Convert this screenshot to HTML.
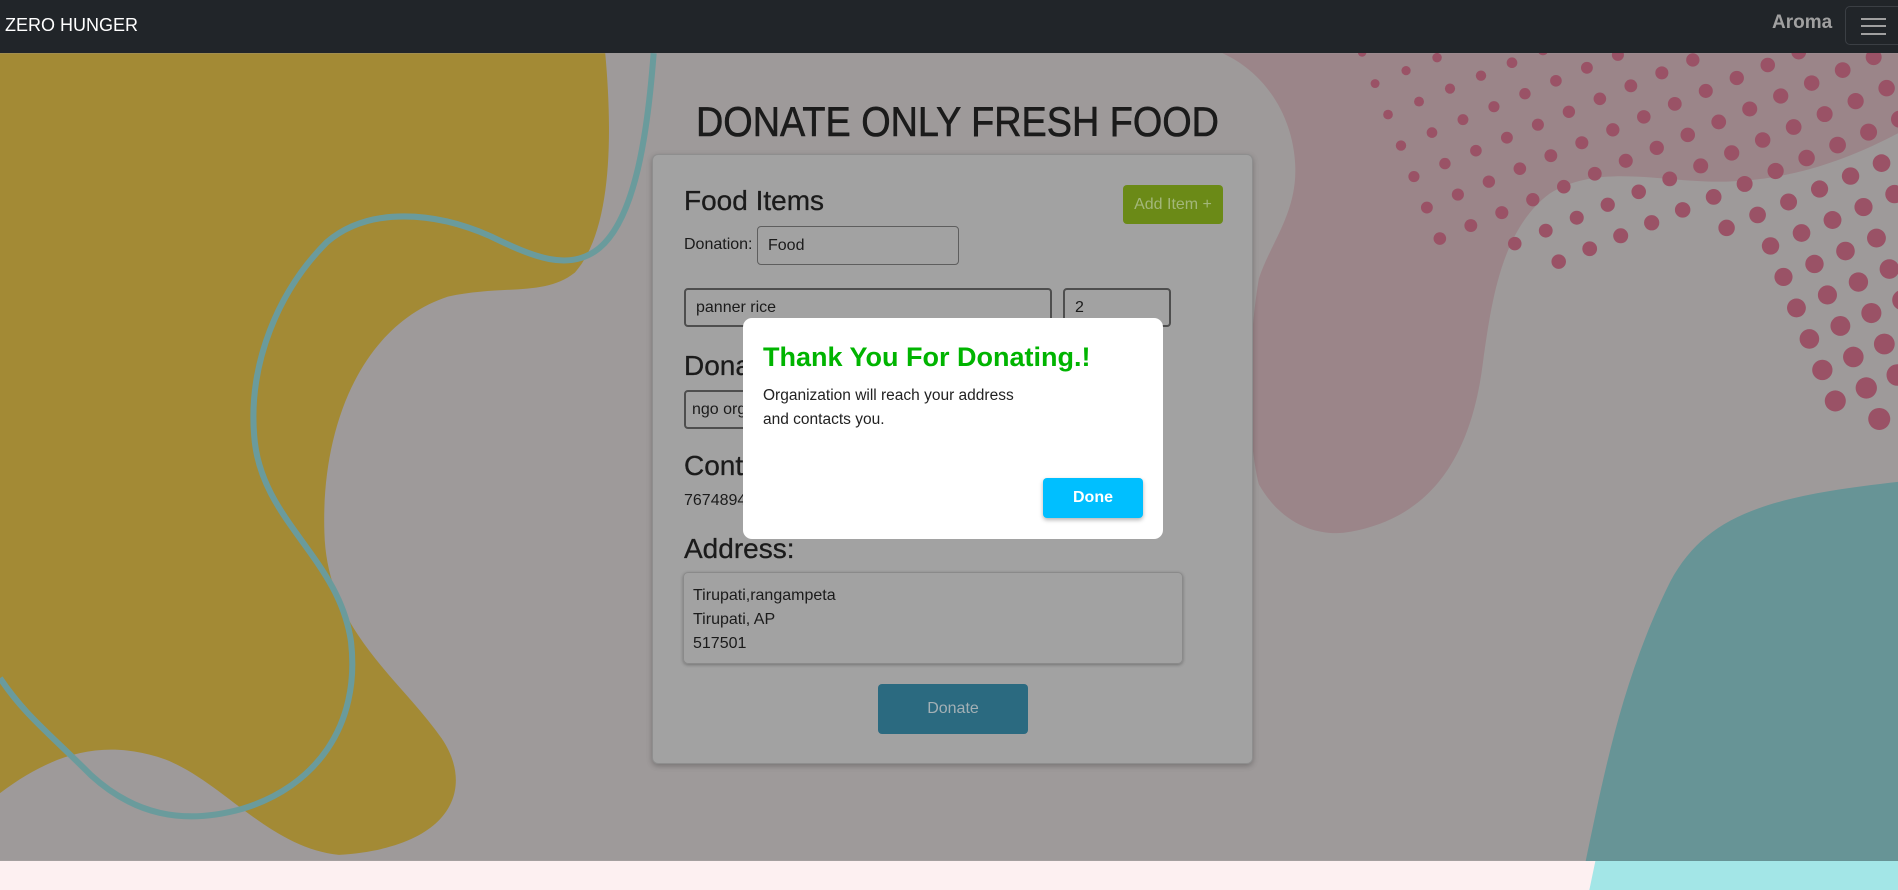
<!DOCTYPE html>
<html><head><meta charset="utf-8"><style>
*{box-sizing:border-box;margin:0;padding:0}
body{width:1898px;height:890px;overflow:hidden;font-family:"Liberation Sans",sans-serif;background:#fdf0f1;position:relative}
.nav{position:absolute;left:0;top:0;width:1898px;height:53px;background:#212529;z-index:5}
.brand{position:absolute;left:5px;top:15px;color:#fff;font-size:18px}
.aroma{position:absolute;left:1772px;top:12px;color:#a0a0a0;font-size:19px;font-weight:bold}
.tog{position:absolute;left:1845px;top:6px;width:60px;height:39px;border:1px solid #3b3f44;border-radius:5px}
.tog i{position:absolute;left:15px;width:25px;height:2px;background:#a0a0a0}
svg.bg{position:absolute;left:0;top:0}
.abs{position:absolute}
.title{left:696px;top:98px;font-size:42px;color:#1b1b1b;white-space:nowrap;transform:scaleX(0.9);transform-origin:0 0;-webkit-text-stroke:0.6px #1b1b1b}
.card{left:652px;top:154px;width:601px;height:610px;background:#a2a2a2;border:1px solid #8e8e8e;border-radius:6px;box-shadow:0 2px 6px rgba(0,0,0,.25)}
.h{font-size:28px;color:#1b1b1b;white-space:nowrap;-webkit-text-stroke:0.3px #1b1b1b}
.inp{border:1px solid #5e5e5e;border-radius:4px;font-size:16px;color:#1b1b1b;padding-left:10px;display:flex;align-items:center}
.inp2{border:2px solid #4e4e4e}
.modal{left:743px;top:318px;width:420px;height:221px;background:#fff;border-radius:9px}
</style></head><body>
<svg class="bg" width="1898" height="890" viewBox="0 0 1568 735" preserveAspectRatio="none">
<rect x="0" y="0" width="1568" height="711" fill="#9e9a9a"/>
<path d="M1010,44 C1045,60 1068,95 1070,136 C1072,175 1050,200 1040,230 C1030,290 1030,360 1040,400 C1060,435 1090,442 1110,440 C1180,430 1215,380 1225,300 C1232,250 1240,190 1280,160 C1320,135 1370,150 1420,150 C1480,150 1530,130 1568,110 L1568,44 Z" fill="#9b8589"/>
<path d="M1310,711 C1325,640 1340,560 1380,480 C1410,425 1460,410 1568,398 L1568,711 Z" fill="#679496"/>
<path d="M1318,711 L1568,711 L1568,735 L1313,735 Z" fill="#a3e6e7"/>
<path d="M0,44 L500,44 C506,110 506,190 475,225 C450,245 415,235 370,245 C300,268 265,350 268,440 C270,520 330,560 365,610 C392,650 375,700 280,706 C220,700 180,640 130,625 C80,610 40,625 0,655 Z" fill="#a38a35"/>
<path d="M540,44 C535,110 525,180 495,205 C470,225 440,212 405,195 C360,175 305,170 270,200 C230,240 205,300 210,360 C215,430 280,460 290,530 C298,600 260,650 200,668 C150,682 110,672 75,640 C40,605 20,590 0,560" fill="none" stroke="#6a9b9c" stroke-width="5"/>
<g id="dots" fill="#9a5266"></g>
</svg>
<script>
var g=document.getElementById('dots'),s='';
for(var i=0;i<=14;i++)for(var j=-8;j<=16;j++){
var x=1136+25.6*i+10.7*j,y=69-10.7*i+25.6*j;
var lim=i<=1?5:i==2?6:i<=7?7:i==8?8:i==9?14:15;
if(j>lim||x>1575||y<40||y>380)continue;
var r=3.7+0.29*j+0.1*i;if(r<3.5)r=3.5;
s+='<circle cx="'+x.toFixed(1)+'" cy="'+y.toFixed(1)+'" r="'+r.toFixed(1)+'"/>';}
g.innerHTML=s;
</script>
<div class="nav"><div class="brand">ZERO HUNGER</div><div class="aroma">Aroma</div>
<div class="tog"><i style="top:11px"></i><i style="top:18px"></i><i style="top:26px"></i></div></div>
<div class="abs title">DONATE ONLY FRESH FOOD</div>
<div class="abs card"></div>
<div class="abs h" style="left:684px;top:185px">Food Items</div>
<div class="abs" style="left:1123px;top:185px;width:100px;height:39px;background:#6b8a17;border-radius:4px;color:#a3b77a;font-size:16px;display:flex;align-items:center;justify-content:center">Add Item +</div>
<div class="abs" style="left:684px;top:236px;font-size:16px;color:#1b1b1b">Donation:</div>
<div class="abs inp" style="left:757px;top:226px;width:202px;height:39px">Food</div>
<div class="abs inp inp2" style="left:684px;top:288px;width:368px;height:39px">panner rice</div>
<div class="abs inp inp2" style="left:1063px;top:288px;width:108px;height:39px">2</div>
<div class="abs h" style="left:684px;top:350px">Donate To:</div>
<div class="abs inp inp2" style="left:684px;top:390px;width:300px;height:39px;padding-left:6px">ngo org</div>
<div class="abs h" style="left:684px;top:450px">Contact:</div>
<div class="abs" style="left:684px;top:492px;font-size:16px;color:#1b1b1b">7674894</div>
<div class="abs h" style="left:684px;top:533px">Address:</div>
<div class="abs" style="left:683px;top:572px;width:500px;height:92px;border:1px solid #8a8a8a;border-radius:5px;box-shadow:0 1px 3px rgba(0,0,0,.3);font-size:16px;color:#1b1b1b;padding:11px 0 0 9px;line-height:24px">Tirupati,rangampeta<br>Tirupati, AP<br>517501</div>
<div class="abs" style="left:878px;top:684px;width:150px;height:50px;background:#2b6a80;border-radius:4px;color:#a3b0b5;font-size:16px;display:flex;align-items:center;justify-content:center">Donate</div>
<div class="abs modal"></div>
<div class="abs" style="left:763px;top:342px;font-size:27px;font-weight:bold;color:#00b400;white-space:nowrap">Thank You For Donating.!</div>
<div class="abs" style="left:763px;top:384px;font-size:15.5px;color:#222;line-height:24px">Organization will reach your address<br>and contacts you.</div>
<div class="abs" style="left:1043px;top:478px;width:100px;height:40px;background:#00bfff;border-radius:4px;color:#fff;font-size:16px;font-weight:bold;display:flex;align-items:center;justify-content:center;box-shadow:0 2px 4px rgba(0,0,0,.3)">Done</div>
</body></html>
